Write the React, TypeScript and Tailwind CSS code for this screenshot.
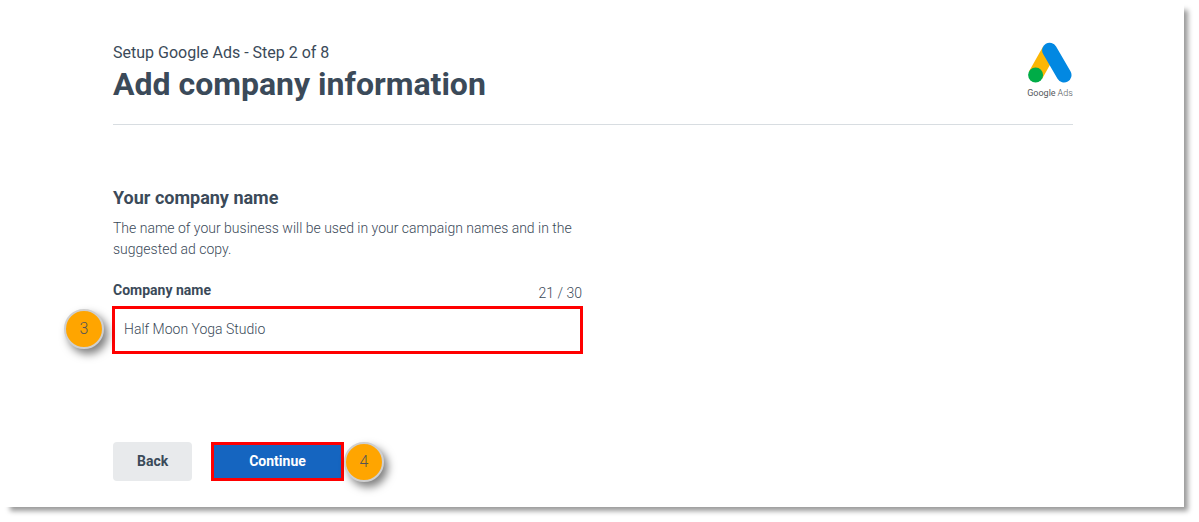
import { useState } from 'react';

const MAX_LENGTH = 30;

function GoogleAdsLogo() {
  return (
    <div className="flex w-[46px] flex-col items-center">
      <svg viewBox="0 0 46 42" className="h-[42px] w-[46px]" aria-hidden="true">
        <path d="M22.6 8.3 8.6 33" stroke="#fbb604" strokeWidth="15" />
        <path d="M22.6 8.3 37 33" stroke="#0288e2" strokeWidth="15" strokeLinecap="round" />
        <circle cx="8.6" cy="33" r="7.5" fill="#00ac47" />
      </svg>
      <p className="mt-[3px] flex gap-[2px] text-[9px] leading-3 whitespace-nowrap text-[#55585c]">
        <span>Google</span>
        <span className="font-light">Ads</span>
      </p>
    </div>
  );
}

function StepBadge({ step }: { step: number }) {
  return (
    <span className="flex size-10 items-center justify-center rounded-full border-2 border-[#cfcfcf] bg-[#ffa500] text-base font-light text-[#555] shadow-[4px_5px_8px_rgba(0,0,0,0.5)]">
      {step}
    </span>
  );
}

export default function App() {
  const [companyName, setCompanyName] = useState('Half Moon Yoga Studio');

  return (
    <div className="bg-white pr-[15px] pb-[15px] font-[Roboto,sans-serif] text-[#3b4a59]">
      <main className="bg-white pt-[42px] pr-[111px] pb-[26px] pl-[113px] shadow-[7px_7px_5px_-3px_rgba(0,0,0,0.4)]">
        <header className="flex items-start justify-between border-b border-[#d8dde1] pb-5">
          <div>
            <p className="mt-px text-base leading-5">Setup Google Ads - Step 2 of 8</p>
            <h1 className="mt-px text-[32px] leading-10 font-bold">Add company information</h1>
          </div>
          <GoogleAdsLogo />
        </header>

        <form onSubmit={(e) => e.preventDefault()}>
          <section className="mt-[61px] max-w-[469px]">
            <h2 className="text-lg leading-6 font-bold">Your company name</h2>
            <p className="mt-2 text-sm leading-[21px] font-light">
              The name of your business will be used in your campaign names and in the suggested ad copy.
            </p>

            <div className="mt-5 flex h-[26px] items-start justify-between">
              <label htmlFor="company-name" className="text-sm leading-5 font-bold">
                Company name
              </label>
              <span className="mt-[3px] text-sm leading-5 font-light">
                {companyName.length} / {MAX_LENGTH}
              </span>
            </div>
            <div className="relative -mx-px">
              <input
                id="company-name"
                type="text"
                value={companyName}
                maxLength={MAX_LENGTH}
                onChange={(e) => setCompanyName(e.target.value)}
                className="block h-12 w-full border-[3px] border-[#ff0000] bg-white px-[9px] pb-[2px] text-sm font-light outline-none"
              />
              <div className="absolute top-[3px] right-full mr-2">
                <StepBadge step={3} />
              </div>
            </div>
          </section>

          <div className="mt-[88px] flex items-center gap-[19px]">
            <button type="button" className="h-[39px] rounded bg-[#e8eaec] px-6 pb-px text-sm font-bold">
              Back
            </button>
            <div className="relative">
              <button
                type="submit"
                className="block h-[39px] border-[3px] border-[#ff0000] bg-[#1565c0] px-[35px] pb-px text-sm font-bold text-white"
              >
                Continue
              </button>
              <div className="absolute top-0 left-full">
                <StepBadge step={4} />
              </div>
            </div>
          </div>
        </form>
      </main>
    </div>
  );
}
